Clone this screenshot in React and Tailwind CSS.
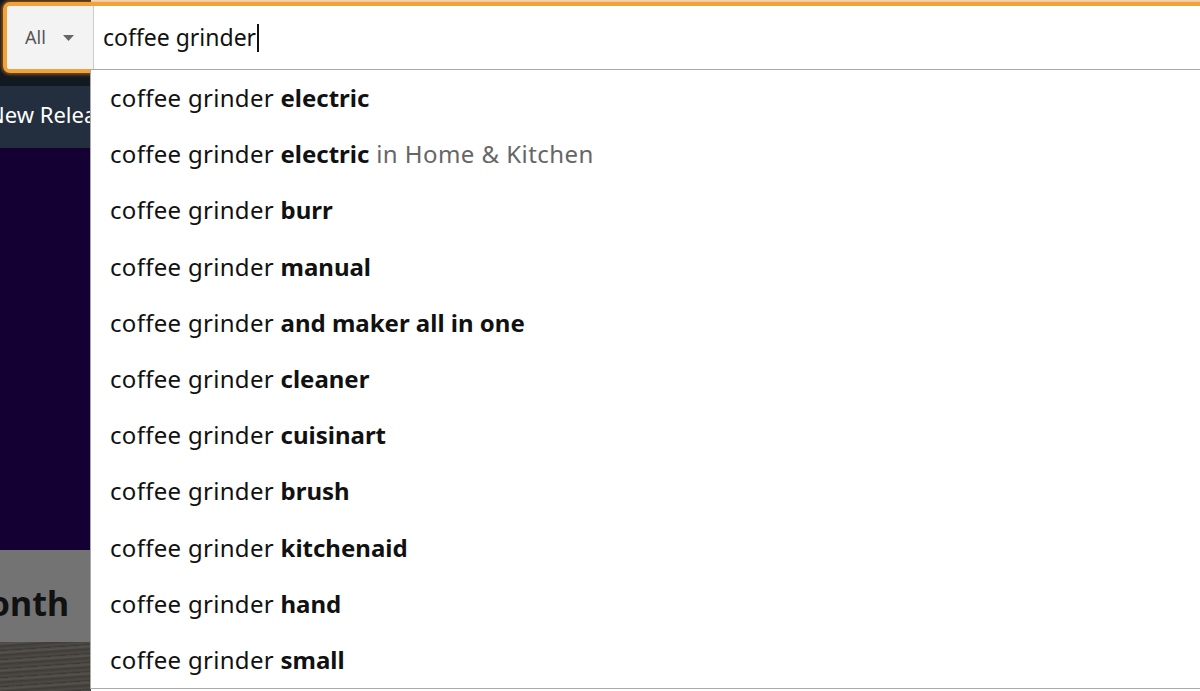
import React from "react";

const suggestions = [
  ["electric", null],
  ["electric", "in Home & Kitchen"],
  ["burr", null],
  ["manual", null],
  ["and maker all in one", null],
  ["cleaner", null],
  ["cuisinart", null],
  ["brush", null],
  ["kitchenaid", null],
  ["hand", null],
  ["small", null],
];

export default function App() {
  return (
    <div
      className="relative w-[1200px] h-[691px] overflow-hidden bg-white"
      style={{ fontFamily: '"Noto Sans", "Open Sans", sans-serif' }}
    >
      {/* left background page strip */}
      <div className="absolute left-0 top-0 w-[91px] h-[691px] flex flex-col">
        <div className="h-[86px] bg-[#131921]"></div>
        <div className="h-[62px] bg-[#232f3e] flex items-center overflow-hidden">
          <span className="text-white text-[22px] whitespace-nowrap -ml-[12px] -mt-[6px]">New Releases</span>
        </div>
        <div className="h-[402px] bg-[#150033]"></div>
        <div className="h-[92px] bg-[#737373] flex items-center justify-end overflow-hidden">
          <span className="text-[#111] text-[34px] font-bold whitespace-nowrap mr-[22px] mt-[14px]">
            Month
          </span>
        </div>
        <div
          className="flex-1"
          style={{
            background:
              "repeating-linear-gradient(176deg, #4a4743 0px, #55524d 2px, #3f3c38 4px, #4d4a45 7px, #3a3835 9px)",
          }}
        ></div>
      </div>

      {/* search bar */}
      <div className="absolute left-[3px] top-[2px] w-[1210px] h-[71px] rounded-[7px] border-[4px] border-[#f0a33a] shadow-[0_0_3px_2px_rgba(228,121,17,0.5)] bg-white overflow-hidden flex">
        <div className="w-[87px] h-full bg-[#f3f3f3] border-r border-[#cdcdcd] flex items-center pl-[18px] gap-[17px]">
          <span className="text-[18px] text-[#555]">All</span>
          <svg width="11" height="6" viewBox="0 0 11 6">
            <path d="M0 0 L11 0 L5.5 6 Z" fill="#666" />
          </svg>
        </div>
        <div className="flex-1 flex items-center pl-[9px]">
          <span className="text-[23px] text-[#111]">coffee grinder</span>
          <span className="w-[2px] h-[28px] bg-[#111] ml-[1px]"></span>
        </div>
      </div>

      {/* suggestions dropdown */}
      <div className="absolute left-[90px] top-[69px] w-[1115px] border border-[#a9a9a9] border-r-0 bg-white flex flex-col">
        {suggestions.map(([b, extra], i) => (
          <div key={i} className="h-[56.2px] flex items-center pl-[19px] text-[24px] text-[#111] whitespace-nowrap">
            <span className="tracking-[0.3px]">coffee grinder&nbsp;</span>
            <span className="font-bold">{b}</span>
            {extra && <span className="text-[#666] tracking-[0.45px]">&nbsp;{extra}</span>}
          </div>
        ))}
      </div>
    </div>
  );
}
